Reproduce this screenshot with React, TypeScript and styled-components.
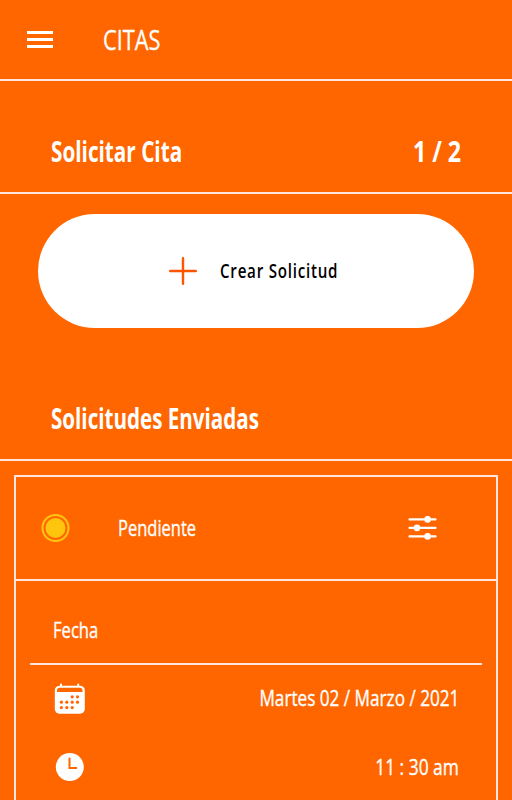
import React from 'react';
import styled, { createGlobalStyle } from 'styled-components';

const orange = '#ff6600';
const line = '#ffe6e0';

const GlobalStyle = createGlobalStyle`
  *, *::before, *::after { box-sizing: border-box; }
  html, body { margin: 0; background: ${orange}; }
  body { overflow: hidden; }
`;

const Screen = styled.main`
  display: flex;
  flex-direction: column;
  height: 800px;
  overflow: hidden;
  background: ${orange};
  color: #fff;
  font-family: 'Open Sans', 'Noto Sans', sans-serif;
`;

const Header = styled.header`
  display: flex;
  align-items: center;
  flex: none;
  height: 81px;
  padding: 0 0 1px 27px;
  border-bottom: 2px solid ${line};
`;

const MenuButton = styled.button`
  display: flex;
  flex-direction: column;
  gap: 4px;
  width: 26px;
  margin-right: 50px;
  padding: 0;
  border: 0;
  background: none;
`;

const MenuBar = styled.span`
  height: 3px;
  background: #fff;
`;

/* Condensed lettering: the glyphs are narrowed horizontally towards one edge. */
const Narrow = styled.span<{ $size: number; $scale: number; $weight?: number; $end?: boolean; $spacing?: number }>`
  display: inline-block;
  white-space: nowrap;
  font-size: ${p => p.$size}px;
  line-height: 1.36;
  font-weight: ${p => p.$weight ?? 400};
  letter-spacing: ${p => p.$spacing ?? 0}px;
  -webkit-text-stroke: ${p => (p.$weight ? 0 : 0.35)}px currentColor;
  transform: scaleX(${p => p.$scale});
  transform-origin: ${p => (p.$end ? 'right' : 'left')} center;
`;

const SectionHeading = styled.h2<{ $height: number }>`
  display: flex;
  align-items: flex-end;
  justify-content: space-between;
  flex: none;
  height: ${p => p.$height}px;
  margin: 0;
  padding: 0 51px 22px 51px;
  border-bottom: 2px solid ${line};
`;

const CreateButton = styled.button`
  display: flex;
  align-items: center;
  flex: none;
  height: 114px;
  margin: 20px 38px 0;
  padding: 0 0 0 131px;
  gap: 23px;
  border: 0;
  border-radius: 57px;
  background: #fff;
  color: #000;
  font-family: inherit;
`;

const Card = styled.article`
  flex: none;
  height: 400px;
  margin: 14px 14px 0;
  border: 2px solid ${line};
`;

const StatusRow = styled.div`
  display: flex;
  align-items: center;
  height: 104px;
  padding: 0 59px 0 25px;
  border-bottom: 2px solid ${line};
`;

const StatusDot = styled.svg`
  flex: none;
  margin-right: 48px;
`;

const FilterIcon = styled.svg`
  margin-left: auto;
`;

const Details = styled.section`
  padding: 0 14px;
`;

const DetailTitle = styled.h3`
  display: flex;
  align-items: center;
  height: 84px;
  margin: 0;
  padding: 16px 0 0 23px;
  border-bottom: 2px solid ${line};
`;

const DetailRow = styled.div<{ $height: number }>`
  display: flex;
  align-items: center;
  justify-content: space-between;
  height: ${p => p.$height}px;
  padding: 0 23px 0 24px;
`;

const calendarDots = [
  [18.2, 13.8], [23.5, 13.8],
  [7.4, 19.2], [12.8, 19.2], [18.2, 19.2], [23.5, 19.2],
  [7.4, 24.6], [12.8, 24.6], [18.2, 24.6],
];

export default function App() {
  return (
    <>
      <GlobalStyle />
      <Screen>
        <Header>
          <MenuButton aria-label="Menú">
            <MenuBar /><MenuBar /><MenuBar />
          </MenuButton>
          <Narrow $size={28} $scale={0.775}>CITAS</Narrow>
        </Header>

        <SectionHeading $height={113}>
          <Narrow $size={28} $scale={0.74} $weight={700}>Solicitar Cita</Narrow>
          <Narrow $size={28} $scale={0.83} $weight={700} $end>1 / 2</Narrow>
        </SectionHeading>

        <CreateButton>
          <svg width="28" height="28" viewBox="0 0 28 28" fill="none" stroke="#ff5500" strokeWidth="2.4" strokeLinecap="round">
            <path d="M14 1.2V26.8M1.2 14H26.8" />
          </svg>
          <Narrow $size={20} $scale={0.757} $weight={600} $spacing={1}>Crear Solicitud</Narrow>
        </CreateButton>

        <SectionHeading $height={133}>
          <Narrow $size={28} $scale={0.735} $weight={700}>Solicitudes Enviadas</Narrow>
        </SectionHeading>

        <Card>
          <StatusRow>
            <StatusDot width="29" height="29" viewBox="0 0 29 29" fill="#ffc40c">
              <circle cx="14.5" cy="14" r="13" fill="none" stroke="#ffc40c" strokeWidth="2" />
              <circle cx="14.5" cy="14" r="10" />
            </StatusDot>
            <Narrow $size={22} $scale={0.75}>Pendiente</Narrow>
            <FilterIcon width="29" height="26" viewBox="0 0 29 26" fill="#fff" stroke="#fff" strokeWidth="2.2" strokeLinecap="round">
              <path d="M1.5 4.4H27.5M1.5 12.9H27.5M1.5 21.4H27.5" />
              <g stroke="none">
                <circle cx="19.6" cy="4.4" r="3.3" />
                <circle cx="9" cy="12.9" r="3.3" />
                <circle cx="19.6" cy="21.4" r="3.3" />
              </g>
            </FilterIcon>
          </StatusRow>
          <Details>
            <DetailTitle><Narrow $size={22} $scale={0.755}>Fecha</Narrow></DetailTitle>
            <DetailRow $height={66}>
              <svg width="31" height="31" viewBox="0 0 31 31">
                <path d="M7 1.5V5M24.2 1.5V5" stroke="#fff" strokeWidth="2" strokeLinecap="round" />
                <rect x="0.8" y="2.7" width="30" height="28" rx="4.8" fill="#fff" />
                <path d="M3 9V7.6Q3 4.8 5.8 4.8H25.7Q28.5 4.8 28.5 7.6V9Z" fill={orange} />
                {calendarDots.map(([x, y]) => <circle key={`${x}-${y}`} cx={x} cy={y} r="1.6" fill={orange} />)}
              </svg>
              <Narrow $size={22} $scale={0.78} $end>Martes 02 / Marzo / 2021</Narrow>
            </DetailRow>
            <DetailRow $height={71}>
              <svg width="31" height="30" viewBox="0 0 31 30">
                <circle cx="15.8" cy="15" r="14" fill="#fff" />
                <path d="M15.5 6.5V16H22.3" fill="none" stroke={orange} strokeWidth="2" strokeLinecap="round" />
              </svg>
              <Narrow $size={22} $scale={0.79} $end>11 : 30 am</Narrow>
            </DetailRow>
          </Details>
        </Card>
      </Screen>
    </>
  );
}
